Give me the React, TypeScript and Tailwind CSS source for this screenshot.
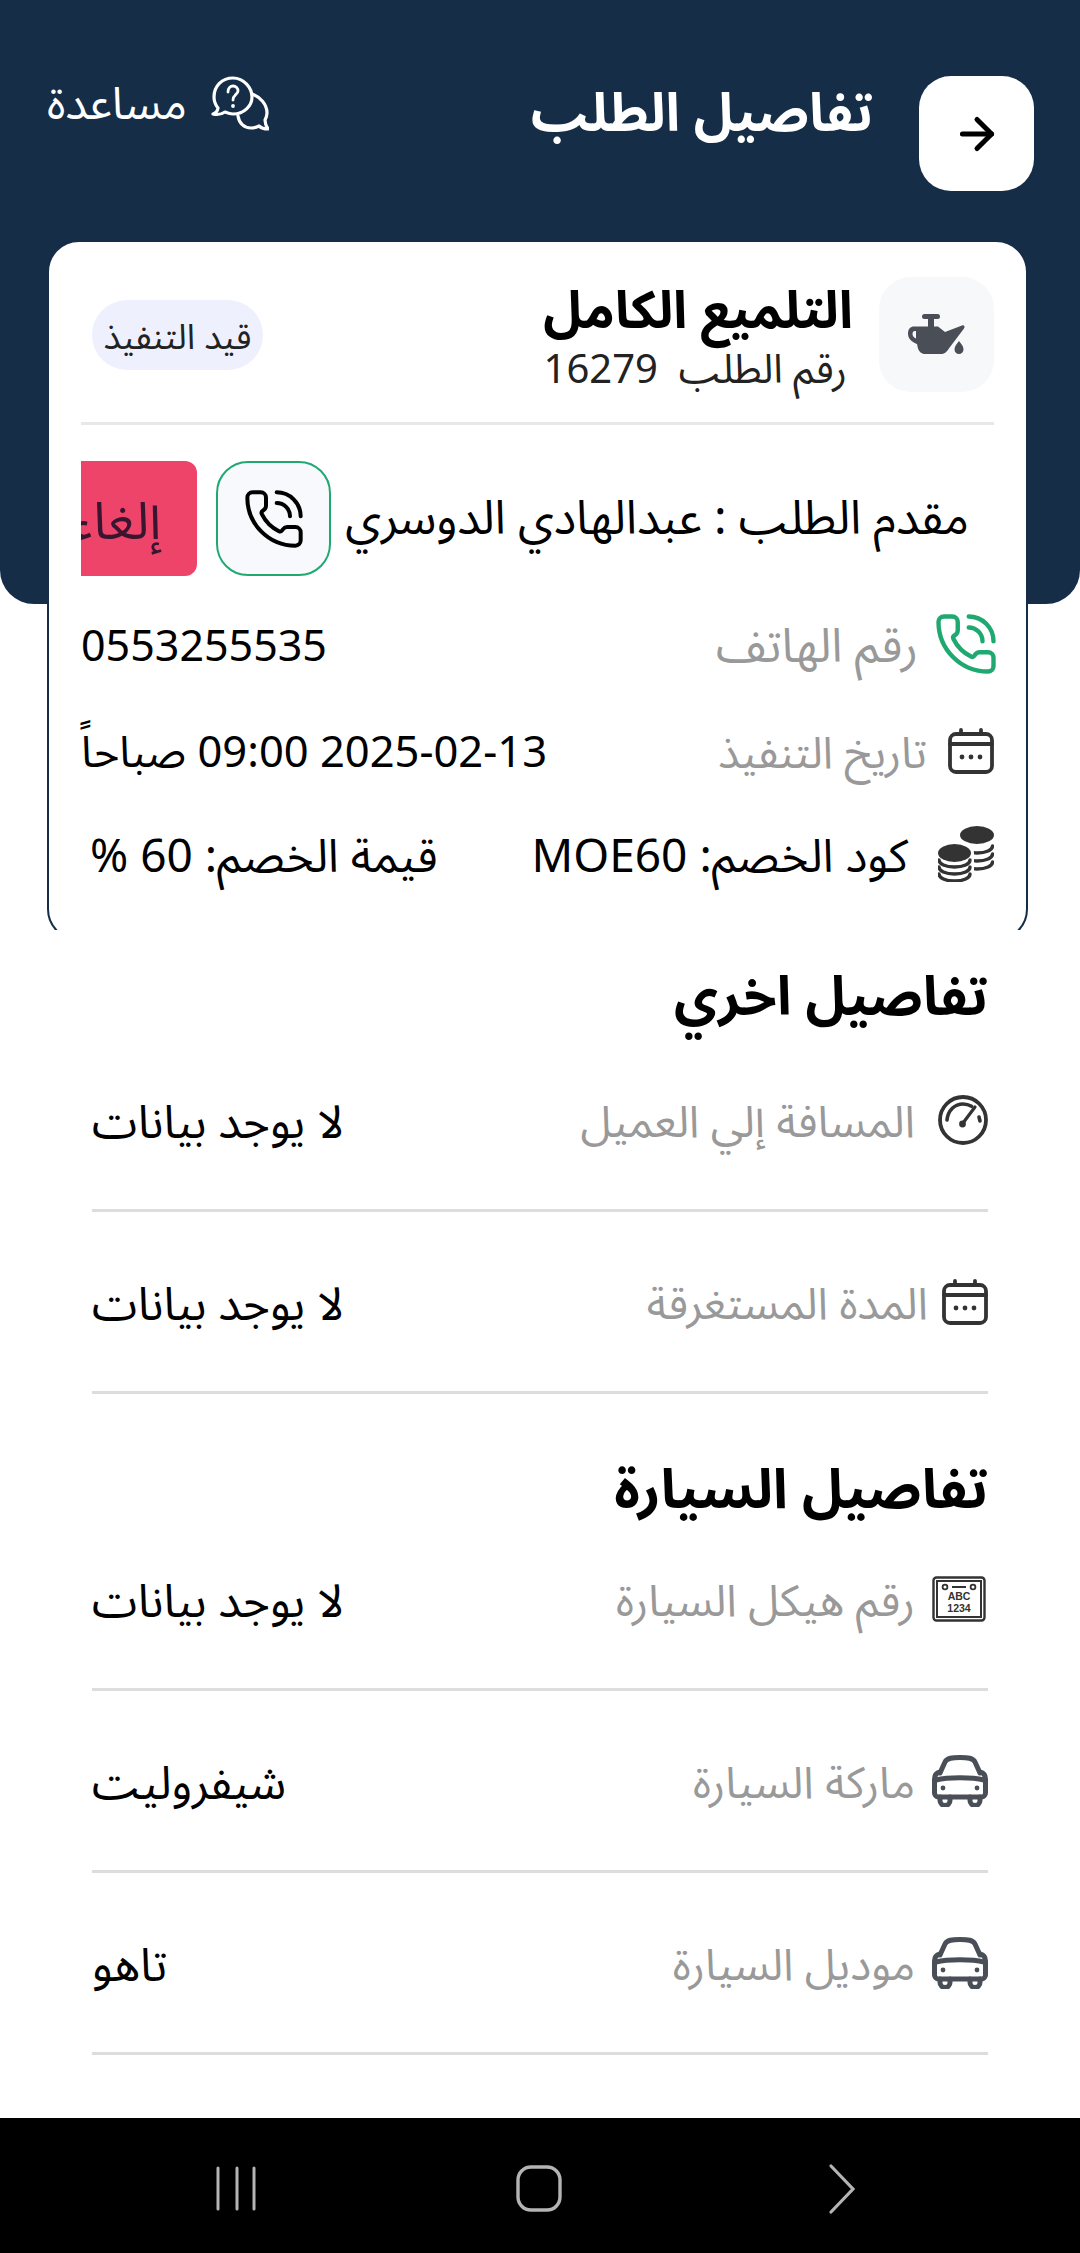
import React from "react";
import { ArrowRight, PhoneCall } from "lucide-react";

function CalendarIcon({ className }: { className?: string }) {
  return (
    <svg viewBox="0 0 46 46" className={className} fill="none" stroke="#333" strokeWidth="3.8" strokeLinecap="round">
      <rect x="2" y="6" width="42" height="38" rx="6" />
      <path d="M2 16h42M13 2v4M33 2v4" />
      <circle cx="14" cy="29" r="2.4" fill="#333" stroke="none" />
      <circle cx="23" cy="29" r="2.4" fill="#333" stroke="none" />
      <circle cx="32" cy="29" r="2.4" fill="#333" stroke="none" />
    </svg>
  );
}

function CoinsIcon({ className }: { className?: string }) {
  const layer = (x: number, y: number) => (
    <path d={`M${x - 15.500} ${y}c0 4 6.500 7 15.500 7s15.500-3 15.500-7`} fill="none" stroke="#333" strokeWidth="3.4" strokeLinecap="round" />
  );
  return (
    <svg viewBox="0 0 56 56" className={className}>
      <ellipse cx="39" cy="9" rx="17" ry="9" fill="#333" />
      {layer(39, 20)}
      {layer(39, 28)}
      {layer(39, 36)}
      <ellipse cx="17" cy="27" rx="19" ry="11" fill="#fff" />
      <rect x="0" y="27" width="36" height="29" fill="#fff" />
      <ellipse cx="16.500" cy="27" rx="16.500" ry="9" fill="#333" />
      {layer(16.500, 34)}
      {layer(16.500, 41)}
      {layer(16.500, 48)}
    </svg>
  );
}

function GaugeIcon({ className }: { className?: string }) {
  return (
    <svg viewBox="0 0 50 50" className={className} fill="none" stroke="#333" strokeLinecap="round">
      <circle cx="25" cy="25" r="23" strokeWidth="3.800" />
      <path d="M9 25C10 15 17 9 25 9c3 0 6 .8 8.500 2.300M41 22l1 4" strokeWidth="3.600" />
      <path d="M25 28l12-16" strokeWidth="3.200" />
      <circle cx="24.500" cy="29" r="3.400" fill="#333" stroke="none" />
    </svg>
  );
}

function PlateIcon({ className }: { className?: string }) {
  return (
    <svg viewBox="0 0 54 46" className={className} fill="none" stroke="#333">
      <rect x="1.500" y="1.500" width="51" height="43" rx="3" strokeWidth="2.400" />
      <rect x="5" y="5" width="44" height="36" strokeWidth="2" />
      <circle cx="13" cy="11" r="2.400" strokeWidth="1.800" />
      <circle cx="41" cy="11" r="2.400" strokeWidth="1.800" />
      <path d="M20 11h14" strokeWidth="2" />
      <text x="27" y="24" textAnchor="middle" fontSize="10.500" fontWeight="700" fill="#333" stroke="none" style={{ fontFamily: '"Liberation Sans", sans-serif' }}>ABC</text>
      <text x="27" y="36" textAnchor="middle" fontSize="10.500" fontWeight="700" fill="#333" stroke="none" style={{ fontFamily: '"Liberation Sans", sans-serif' }}>1234</text>
    </svg>
  );
}

function CarIcon({ className }: { className?: string }) {
  return (
    <svg viewBox="0 0 56 52" className={className} fill="none" stroke="#4a4f57" strokeWidth="5" strokeLinecap="round" strokeLinejoin="round">
      <path d="M8 18l5-11C15 3 20 2.500 28 2.500s13 .5 15 4.500l5 11" />
      <path d="M8 17C4 18 2.500 20 2.500 24V38a4 4 0 0 0 4 4H49.500a4 4 0 0 0 4-4V24C53.500 20 52 18 48 17" />
      <path d="M4 25c12-3 36-3 48 0" />
      <path d="M8 42v3.500a5 5 0 0 0 10 0V42M38 42v3.500a5 5 0 0 0 10 0V42" />
      <circle cx="11" cy="33" r="2.400" fill="#4a4f57" stroke="none" />
      <circle cx="45" cy="33" r="2.400" fill="#4a4f57" stroke="none" />
    </svg>
  );
}

function OilIcon({ className }: { className?: string }) {
  return (
    <svg viewBox="0 0 58 41" className={className} fill="#4a4f57">
      <rect x="14" y="0" width="18" height="5" rx="2.500" />
      <rect x="20" y="4" width="6" height="10" />
      <path
        fillRule="evenodd"
        d="M6 12.500H30L37 18L54 11.500c2-.7 3.500 1.300 2 3L42 33c-3 4.500-5 7-9 7H17c-3.500 0-6-2.500-7-5.500L9 30C4 28 0 25 0 19.500C0 15 2.500 12.500 6 12.500ZM7 17C5 17 4.500 18.500 4.500 20C4.500 22 6 23.500 8 24.500L8 17Z"
      />
      <path d="M51 27c2 3 4.500 5 4.500 8.500a4.500 4.500 0 0 1-9 0c0-3.500 2.500-5.500 4.500-8.500z" />
    </svg>
  );
}

function HelpIcon({ className }: { className?: string }) {
  return (
    <svg viewBox="0 0 58 58" className={className} fill="none" stroke="#fff" strokeWidth="3.200" strokeLinejoin="round" strokeLinecap="round">
      <path d="M22 2C11 2 3 10 3 21c0 5 1.500 8 4 11-.5 3-2 5-5 6 4 1 9 0 12-2 2.500 1 5 2 8 2 11 0 19-8 19-17S33 2 22 2z" />
      <path d="M41 18c8 3 15 10 15 19 0 3-1 5-2 7 0 3 1 6 3 9-4 0-7-1-9-3-2 1-5 2-8 2-7 0-12-5-13-12" />
      <path d="M17 16c0-4 2.500-6 5-6 3 0 5 2 5 5s-5 4-5 9" strokeWidth="2.800" />
      <circle cx="22" cy="30" r="1.900" fill="#fff" stroke="none" />
    </svg>
  );
}

function InfoRow({ icon, gap, label, value }: { icon: React.ReactNode; gap: string; label: string; value: string }) {
  return (
    <div className="flex h-[182px] items-center justify-between border-b-[3px] border-[#dddddd]">
      <div className={`flex items-center ${gap}`}>
        {icon}
        <span className="text-[44px] text-[#999999]">{label}</span>
      </div>
      <span className="text-[46px] text-black">{value}</span>
    </div>
  );
}

export default function App() {
  return (
    <div dir="rtl" className="flex h-[2253px] w-[1080px] flex-col overflow-hidden bg-white font-['Noto_Sans',_'Noto_Sans_Arabic',_'DejaVu_Sans',_sans-serif] leading-none">
      <div className="relative h-[930px] overflow-hidden">
        <div className="absolute inset-x-0 top-0 h-[604px] rounded-b-[34px] bg-[#152d47]" />
        <header className="relative flex h-[240px] items-start justify-between pl-[47px] pr-[46px] pt-[76px]">
          <div className="flex items-start gap-[46px]">
            <div className="flex h-[115px] w-[115px] items-center justify-center rounded-[32px] bg-white">
              <ArrowRight className="h-[50px] w-[50px] text-black" strokeWidth={2.4} />
            </div>
            <h1 className="pt-[8px] text-[53px] font-bold text-white">تفاصيل الطلب</h1>
          </div>
          <div className="flex items-center gap-[24px]">
            <HelpIcon className="h-[58px] w-[58px]" />
            <span className="pb-[8px] text-[45px] text-white">مساعدة</span>
          </div>
        </header>
        <section className="relative ml-[47px] mr-[52px] h-[701px] rounded-[32px] border-2 border-[#152d47] bg-white px-[32px] pt-[35px]">
          <div className="flex h-[148px] items-start justify-between border-b-[3px] border-[#e8e8e8]">
            <div className="flex items-center gap-[26px]">
              <div className="flex h-[115px] w-[115px] items-center justify-center rounded-[32px] bg-[#f7f8fa]">
                <OilIcon className="h-[41px] w-[58px]" />
              </div>
              <div className="flex flex-col gap-[14px]">
                <h2 className="text-[52px] font-bold text-black">التلميع الكامل</h2>
                <p className="pr-[6px] text-[40px] text-[#222]">رقم الطلب&nbsp; 16279</p>
              </div>
            </div>
            <span className="ml-[11px] mt-[23px] flex h-[70px] w-[171px] items-center justify-center whitespace-nowrap rounded-full bg-[#eef1fd] text-[35px] text-[#222]">قيد التنفيذ</span>
          </div>
          <div className="mt-[36px] flex h-[115px] items-center overflow-hidden pr-[25px]">
            <span className="shrink-0 whitespace-nowrap pb-[4px] text-[47px] text-black">مقدم الطلب : عبدالهادي الدوسري</span>
            <div className="mr-[14px] flex h-[115px] w-[115px] shrink-0 items-center justify-center rounded-[32px] border-2 border-[#1fa971] bg-[#f7f9fc]">
              <PhoneCall className="h-[64px] w-[64px] text-black" strokeWidth={1.5} />
            </div>
            <div className="mr-[19px] flex h-[115px] w-[200px] shrink-0 items-center rounded-[12px] bg-[#ef4469] pr-[36px]">
              <span className="whitespace-nowrap text-[52px] text-[#3a1530]">إلغاء</span>
            </div>
          </div>
          <div className="mt-[38px] flex h-[60px] items-center justify-between">
            <div className="flex items-center gap-[20px]">
              <PhoneCall className="-mx-[5px] h-[66px] w-[66px] text-[#1fa971]" strokeWidth={1.6} />
              <span className="text-[47px] text-[#999999]">رقم الهاتف</span>
            </div>
            <span dir="ltr" className="text-[43px] text-black">0553255535</span>
          </div>
          <div className="mt-[47px] flex h-[60px] items-center justify-between">
            <div className="flex items-center gap-[21px]">
              <CalendarIcon className="h-[46px] w-[46px]" />
              <span className="text-[44px] text-[#999999]">تاريخ التنفيذ</span>
            </div>
            <span className="text-[43.5px] text-black">2025-02-13 09:00 صباحاً</span>
          </div>
          <div className="mt-[43px] flex h-[60px] items-center justify-between">
            <div className="flex items-center gap-[30px]">
              <CoinsIcon className="h-[56px] w-[56px]" />
              <span className="text-[46px] text-black">كود الخصم: MOE60</span>
            </div>
            <span className="pl-[9px] text-[46px] text-black">قيمة الخصم: 60 %</span>
          </div>
        </section>
      </div>

      <main className="flex-1 px-[92px]">
        <h3 className="pb-[16px] pt-[44px] text-[54px] font-bold leading-[40px] text-black">تفاصيل اخري</h3>
        <InfoRow gap="gap-[23px]" icon={<GaugeIcon className="h-[50px] w-[50px]" />} label="المسافة إلي العميل" value="لا يوجد بيانات" />
        <InfoRow gap="gap-[14px]" icon={<CalendarIcon className="h-[46px] w-[46px]" />} label="المدة المستغرقة" value="لا يوجد بيانات" />
        <h3 className="pb-[2px] pt-[73px] text-[55px] font-bold leading-[40px] text-black">تفاصيل السيارة</h3>
        <InfoRow gap="gap-[17px]" icon={<PlateIcon className="mr-[2px] h-[46px] w-[54px]" />} label="رقم هيكل السيارة" value="لا يوجد بيانات" />
        <InfoRow gap="gap-[17px]" icon={<CarIcon className="h-[52px] w-[56px]" />} label="ماركة السيارة" value="شيفروليت" />
        <InfoRow gap="gap-[17px]" icon={<CarIcon className="h-[52px] w-[56px]" />} label="موديل السيارة" value="تاهو" />
      </main>

      <nav dir="ltr" className="flex h-[135px] items-center justify-center bg-black">
        <svg viewBox="0 0 1080 135" className="h-[135px] w-[1080px]" fill="none" stroke="#b4b4b4" strokeLinecap="round">
          <path d="M218 50v41M237 50v41M254 50v41" strokeWidth="3" />
          <rect x="518" y="49" width="42" height="43" rx="13" strokeWidth="3.4" />
          <path d="M831 48l22 23-22 23" strokeWidth="3.2" />
        </svg>
      </nav>
    </div>
  );
}
